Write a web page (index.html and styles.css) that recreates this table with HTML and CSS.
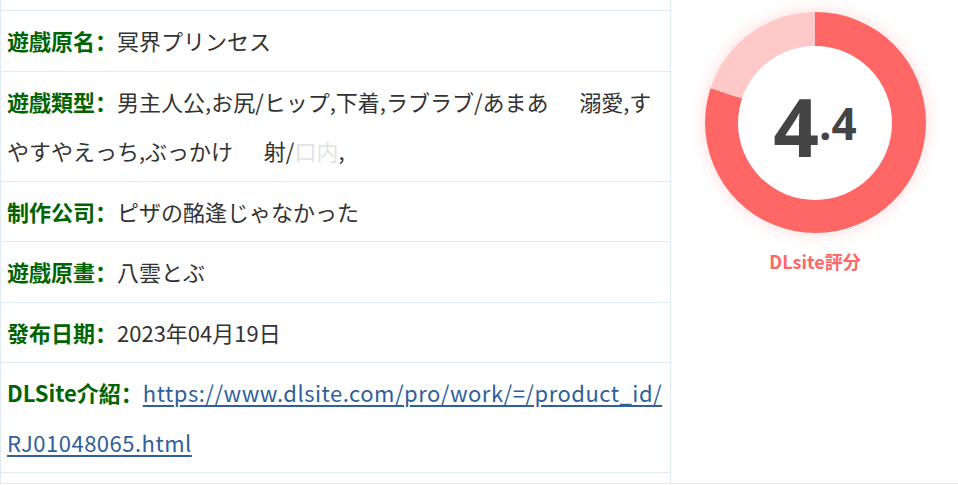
FILE: index.html
```html
<!DOCTYPE html>
<html lang="ja">
<head>
<meta charset="utf-8">
<link rel="stylesheet" href="styles.css">
</head>
<body>
<div class="wrap">
  <div class="info">
    <div class="rows">
      <div class="row"><b class="lbl" lang="zh-CN">遊戲原名：</b>冥界プリンセス</div>
      <div class="row"><b class="lbl" lang="zh-CN">遊戲類型：</b>男主人公,お尻/ヒップ,下着,ラブラブ/あまあ<span class="mask">ま/</span>溺愛,すやすやえっち,ぶっかけ<span class="mask">/顔</span>射/<span class="faint">口内</span>,</div>
      <div class="row"><b class="lbl" lang="zh-CN">制作公司：</b>ピザの酩逢じゃなかった</div>
      <div class="row"><b class="lbl" lang="zh-CN">遊戲原畫：</b>八雲とぶ</div>
      <div class="row"><b class="lbl" lang="zh-CN">發布日期：</b>2023年04月19日</div>
      <div class="row"><b class="lbl" lang="zh-CN">DLSite介紹：</b><a class="link" href="#">https://www.dlsite.com/pro/work/=/product_id/<wbr>RJ01048065.html</a></div>
    </div>
  </div>
  <div class="score">
    <div class="donut">
      <div class="hole">
        <span class="big">4</span><span class="small">.4</span>
      </div>
    </div>
    <div class="cap">DLsite評分</div>
  </div>
</div>
</body>
</html>
```
FILE: styles.css
```css
html, body {
  margin: 0;
  padding: 0;
  background: #fff;
}
body {
  font-family: "Noto Sans CJK JP", "Noto Sans", sans-serif;
  color: #333;
}
.wrap {
  display: flex;
  width: 958px;
  height: 483px;
  border-left: 1px solid #e1ebf4;
  border-bottom: 1px solid #e1ebf4;
  box-sizing: content-box;
}
.info {
  width: 670px;
  padding: 10px 0 10px 0;
  border-right: 1px solid #e1ebf4;
  box-sizing: border-box;
}
.rows {
  border-top: 1px solid #e1ebf4;
}
.row {
  font-size: 22px;
  line-height: 49.5px;
  padding: 5px 4px 5px 6px;
  border-bottom: 1px solid #e1ebf4;
}
.lbl {
  color: #006400;
  font-weight: 700;
  font-family: "Noto Sans CJK SC", "Noto Sans", sans-serif;
}
.link {
  color: #2f5f9c;
  text-decoration: underline;
  text-underline-offset: 3px;
  letter-spacing: 0.5px;
}
.mask {
  color: transparent;
}
.faint {
  color: #e2e2e2;
}
.score {
  flex: 1;
  display: flex;
  flex-direction: column;
  align-items: center;
  padding-top: 12px;
}
.donut {
  width: 221px;
  height: 221px;
  border-radius: 50%;
  background: conic-gradient(#ff6666 0deg 288deg, #ffc9c9 288deg 360deg);
  box-shadow: 0 0 16px rgba(255, 102, 102, 0.25);
  display: flex;
  align-items: center;
  justify-content: center;
}
.hole {
  width: 154px;
  height: 154px;
  border-radius: 50%;
  background: #fff;
  display: flex;
  align-items: center;
  justify-content: center;
  color: #444;
  font-family: "Open Sans", "Noto Sans", sans-serif;
  font-weight: 700;
}
.big {
  font-size: 80px;
  line-height: 1;
  margin-top: 6px;
}
.small {
  font-size: 44px;
  line-height: 1;
  margin-top: 0;
}
.cap {
  margin-top: 15px;
  color: #ff6666;
  font-weight: 700;
  font-size: 18px;
}
```
